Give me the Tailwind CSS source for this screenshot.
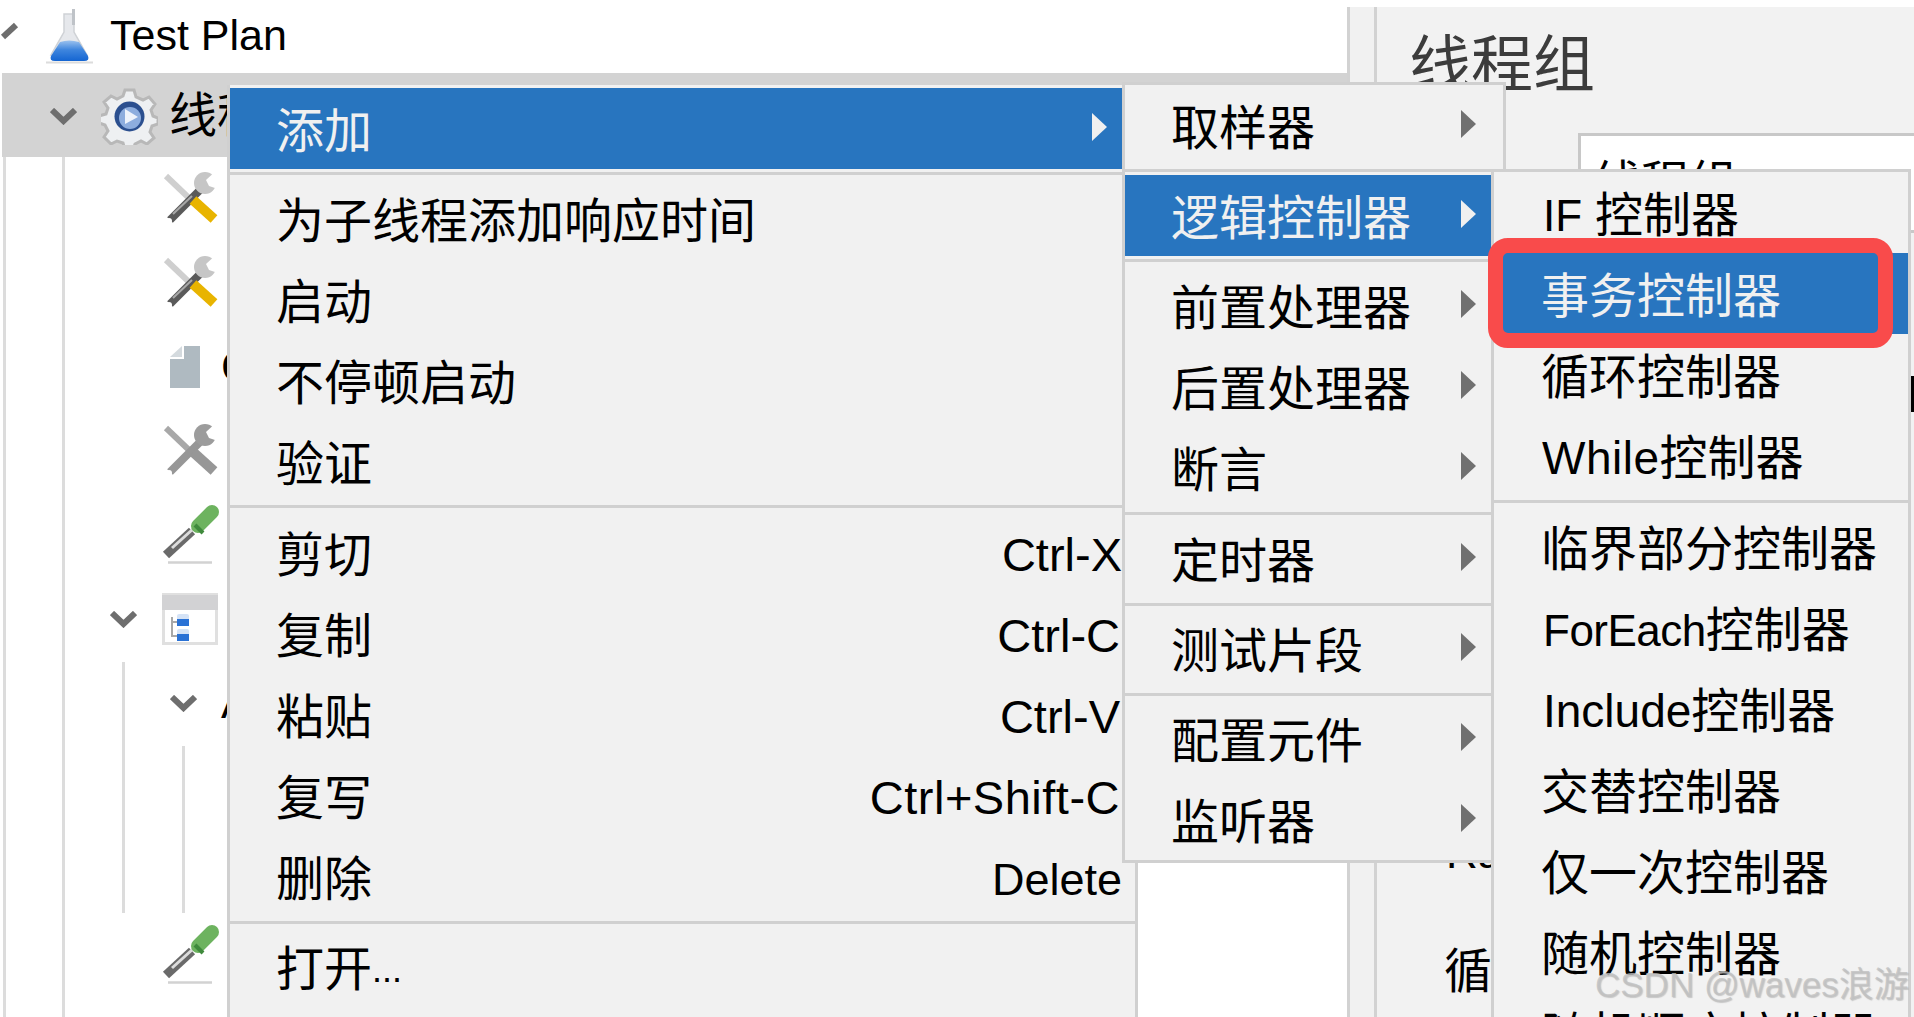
<!DOCTYPE html>
<html lang="zh">
<head>
<meta charset="utf-8">
<script src="https://cdn.jsdelivr.net/npm/@tailwindcss/browser@4"></script>
</head>
<body class="m-0 bg-white">
<div class="relative w-[1914px] h-[1017px] overflow-hidden bg-white text-black text-[48px] [font-family:'Liberation_Sans','Noto_Sans_CJK_SC',sans-serif]">

  <!-- base window -->
  <div class="flex h-full pt-[7px]">
    <!-- tree -->
    <div class="relative w-[1347px] shrink-0 bg-white overflow-hidden">
      <div class="absolute left-[3px] top-[150px] bottom-0 w-[3px] bg-[#dcdcdc]"></div>
      <div class="absolute left-[62px] top-[150px] bottom-0 w-[3px] bg-[#dcdcdc]"></div>
      <div class="absolute left-[122px] top-[655px] h-[251px] w-[3px] bg-[#dcdcdc]"></div>
      <div class="absolute left-[182px] top-[739px] h-[167px] w-[3px] bg-[#dcdcdc]"></div>
      <svg class="absolute left-0 top-[14px] w-[20px] h-[20px]" viewBox="0 0 20 20"><path d="M3 16 L16 4" stroke="#6e6e6e" stroke-width="6" fill="none"/></svg>

      <div class="-mt-[18px] flex flex-col">
        <!-- Test Plan -->
        <div class="flex items-center h-[84px] pl-[46px] pt-[9px]">
          <svg class="w-[48px] h-[56px] mr-[16px] shrink-0" viewBox="0 0 48 56">
            <defs><linearGradient id="liq" x1="0" y1="0" x2="0" y2="1"><stop offset="0" stop-color="#9cc2ee"/><stop offset="0.45" stop-color="#3f86de"/><stop offset="1" stop-color="#1465d2"/></linearGradient></defs>
            <path d="M18 6 H28 V24 L41 47 H5 L18 24 Z" fill="#e6e8ec" stroke="#cfd2d6" stroke-width="1.5"/>
            <path d="M26 1 h3 v16 h-3z" fill="#bfc3c8"/>
            <path d="M14 34 Q23 31 33 34 L42 48 Q44 53 38 53 H9 Q3 53 5 48 Z" fill="url(#liq)"/>
            <path d="M0 54.5 H47" stroke="#dcdcdc" stroke-width="2"/>
          </svg>
          <span class="text-[43px] leading-none">Test Plan</span>
        </div>
        <!-- thread group -->
        <div class="flex items-center h-[84px] pl-[48px] pt-[2px] bg-[#d3d3d3] ml-[2px]">
          <svg class="w-[27px] h-[17px] mr-[24px] shrink-0" viewBox="0 0 27 17"><path d="M2 2 L13.5 13 L25 2" stroke="#6e6e6e" stroke-width="6" fill="none"/></svg>
          <svg class="w-[57px] h-[57px] mr-[11px] shrink-0" viewBox="0 0 57 57">
            <path d="M24 2 h9 l2 7 l7 3 l6 -3 l6 7 l-4 6 l2 6 l5 2 v6 l-6 2 l-2 6 l4 6 l-7 6 l-6 -3 l-6 3 l-2 6 h-8 l-2 -7 l-6 -2 l-6 3 l-7 -7 l4 -6 l-3 -6 l-6 -2 v-7 l7 -2 l2 -6 l-4 -6 l7 -6 l6 3 l6 -3 z" fill="#eef0f2" stroke="#b8b8b8" stroke-width="3"/>
            <circle cx="28.5" cy="28.5" r="15" fill="#2b4f8f"/>
            <circle cx="29" cy="30" r="11" fill="#8dadde"/>
            <path d="M24 21 L37 29 L24 36 Z" fill="#eef3fb"/>
          </svg>
          <span class="leading-none">线程组</span>
        </div>
        <!-- tools -->
        <div class="flex items-center h-[84px] pl-[162px]">
          <svg class="w-[56px] h-[56px]" viewBox="0 0 56 56">
            <path d="M4 5 L27 27" stroke="#cfcfcf" stroke-width="6" fill="none"/>
            <path d="M8 49 L38 19" stroke="#5a5a5a" stroke-width="8" fill="none"/>
            <path d="M11 43 L30 25" stroke="#a8a8a8" stroke-width="2" fill="none"/>
            <circle cx="43" cy="12" r="11" fill="#c6c6c6"/>
            <path d="M56 -2 L44 9 L47 15 L56 18 Z" fill="#fff"/>
            <path d="M31 29 L52 48" stroke="#e8b400" stroke-width="10" fill="none"/>
            <circle cx="7" cy="50" r="3" fill="#fff"/>
          </svg>
        </div>
        <div class="flex items-center h-[84px] pl-[162px]">
          <svg class="w-[56px] h-[56px]" viewBox="0 0 56 56">
            <path d="M4 5 L27 27" stroke="#cfcfcf" stroke-width="6" fill="none"/>
            <path d="M8 49 L38 19" stroke="#5a5a5a" stroke-width="8" fill="none"/>
            <path d="M11 43 L30 25" stroke="#a8a8a8" stroke-width="2" fill="none"/>
            <circle cx="43" cy="12" r="11" fill="#c6c6c6"/>
            <path d="M56 -2 L44 9 L47 15 L56 18 Z" fill="#fff"/>
            <path d="M31 29 L52 48" stroke="#e8b400" stroke-width="10" fill="none"/>
            <circle cx="7" cy="50" r="3" fill="#fff"/>
          </svg>
        </div>
        <!-- page -->
        <div class="flex items-center h-[84px] pl-[170px]">
          <svg class="w-[30px] h-[42px] mr-[21px] shrink-0" viewBox="0 0 30 42"><path d="M14 0 H30 V42 H0 V13 H14 Z" fill="#afbac1"/><path d="M0 11 L12 0 V11 Z" fill="#d4dade"/></svg>
          <span class="text-[44px] leading-none">CSV</span>
        </div>
        <!-- gray tools -->
        <div class="flex items-center h-[84px] pl-[162px]">
          <svg class="w-[56px] h-[56px]" viewBox="0 0 56 56">
            <path d="M4 5 L27 27" stroke="#a8a8a8" stroke-width="6" fill="none"/>
            <path d="M8 49 L38 19" stroke="#979797" stroke-width="8" fill="none"/>
            <circle cx="43" cy="12" r="11" fill="#9c9c9c"/>
            <path d="M56 -2 L44 9 L47 15 L56 18 Z" fill="#fff"/>
            <path d="M31 29 L52 48" stroke="#979797" stroke-width="10" fill="none"/>
            <circle cx="7" cy="50" r="3" fill="#fff"/>
          </svg>
        </div>
        <!-- dropper -->
        <div class="flex items-center h-[84px] pl-[162px]">
          <svg class="w-[57px] h-[60px]" viewBox="0 0 57 60">
            <path d="M4 50 L30 26" stroke="#6a6a6a" stroke-width="9" fill="none"/>
            <path d="M10 43 L31 24" stroke="#dcdcdc" stroke-width="3" fill="none"/>
            <path d="M36 21 L50 7" stroke="#6db35f" stroke-width="14" stroke-linecap="round" fill="none"/>
            <path d="M33 20 L41 28" stroke="#3f8a3c" stroke-width="4" fill="none"/>
            <path d="M6 57.5 H50" stroke="#d2d2d2" stroke-width="2.5"/>
          </svg>
        </div>
        <!-- table -->
        <div class="flex items-center h-[84px] pl-[110px]">
          <svg class="w-[27px] h-[17px] mr-[25px] shrink-0" viewBox="0 0 27 17"><path d="M2 2 L13.5 13 L25 2" stroke="#6e6e6e" stroke-width="6" fill="none"/></svg>
          <svg class="w-[56px] h-[52px]" viewBox="0 0 56 52">
            <rect x="1.5" y="1.5" width="53" height="49" fill="#fff" stroke="#e0e0e0" stroke-width="3"/>
            <rect x="0" y="2" width="56" height="15" fill="#d2d2d4"/>
            <path d="M10 24 V43 H16 M10 29 H16" stroke="#a8a8a8" stroke-width="2" fill="none"/>
            <rect x="15" y="21" width="12" height="12" rx="2" fill="#d5e3f6"/><rect x="15" y="26" width="12" height="7" fill="#2a72d5"/>
            <rect x="15" y="36" width="12" height="12" rx="2" fill="#d5e3f6"/><rect x="15" y="41" width="12" height="7" fill="#2a72d5"/>
          </svg>
        </div>
        <!-- nested -->
        <div class="flex items-center h-[84px] pl-[170px]">
          <svg class="w-[27px] h-[17px] mr-[24px] shrink-0" viewBox="0 0 27 17"><path d="M2 2 L13.5 13 L25 2" stroke="#6e6e6e" stroke-width="6" fill="none"/></svg>
          <span class="text-[44px] leading-none">A</span>
        </div>
        <div class="h-[84px]"></div>
        <div class="h-[84px]"></div>
        <!-- dropper 2 -->
        <div class="flex items-center h-[84px] pl-[162px]">
          <svg class="w-[57px] h-[60px]" viewBox="0 0 57 60">
            <path d="M4 50 L30 26" stroke="#6a6a6a" stroke-width="9" fill="none"/>
            <path d="M10 43 L31 24" stroke="#dcdcdc" stroke-width="3" fill="none"/>
            <path d="M36 21 L50 7" stroke="#6db35f" stroke-width="14" stroke-linecap="round" fill="none"/>
            <path d="M33 20 L41 28" stroke="#3f8a3c" stroke-width="4" fill="none"/>
            <path d="M6 57.5 H50" stroke="#d2d2d2" stroke-width="2.5"/>
          </svg>
        </div>
      </div>
    </div>
    <!-- sash -->
    <div class="w-[30px] shrink-0 bg-[#f1f1f1] border-x-[3px] border-[#d2d2d2]"></div>
    <!-- right panel -->
    <div class="flex-1 bg-[#f2f2f2] pl-[32px] flex flex-col">
      <div class="h-[126px] pt-[24px] text-[62px] leading-[70px] text-[#3c3c3c]">线程组</div>
      <div class="ml-[169px] h-[100px] -mr-[40px] bg-white border-[3px] border-[#c8c8c8] pl-[12px] pt-[16px] leading-[64px]">线程组</div>
      <div class="mt-[595px] pl-[37px] text-[44px] leading-[50px]">Ramp</div>
      <div class="mt-[64px] pl-[35px] leading-[60px]">循环次数</div>
    </div>
  </div>

  <!-- menu 1 -->
  <div class="absolute left-[227px] top-[85px] bottom-0 w-[911px] bg-[#f1f1f1] border-l-[3px] border-r-[3px] border-[#d0d0d0] pt-[3px]">
    <div class="flex items-center h-[81px] pl-[46px] pt-[6px] bg-[#2875bf] text-[#f0f0f0]">添加<svg class="ml-auto mr-[28px] -mt-[10px] w-[15px] h-[30px]" viewBox="0 0 15 30"><path d="M0 1 L15 15 L0 29Z" fill="#f0f0f0"/></svg></div>
    <div class="h-[3px] mt-[3px] mb-[3px] bg-[#d0d0d0]"></div>
    <div class="flex items-center h-[81px] pl-[46px] pt-[6px]">为子线程添加响应时间</div>
    <div class="flex items-center h-[81px] pl-[46px] pt-[6px]">启动</div>
    <div class="flex items-center h-[81px] pl-[46px] pt-[6px]">不停顿启动</div>
    <div class="flex items-center h-[81px] pl-[46px] pt-[6px]">验证</div>
    <div class="h-[3px] mt-[3px] mb-[4px] bg-[#d0d0d0]"></div>
    <div class="flex items-center justify-between h-[81px] pl-[46px] pr-[13px] pt-[6px]"><span>剪切</span><span class="text-[47px]">Ctrl-X</span></div>
    <div class="flex items-center justify-between h-[81px] pl-[46px] pr-[15px] pt-[6px]"><span>复制</span><span class="text-[47px]">Ctrl-C</span></div>
    <div class="flex items-center justify-between h-[81px] pl-[46px] pr-[15px] pt-[6px]"><span>粘贴</span><span class="text-[47px]">Ctrl-V</span></div>
    <div class="flex items-center justify-between h-[81px] pl-[46px] pr-[15px] pt-[6px]"><span>复写</span><span class="text-[47px] tracking-[0.5px]">Ctrl+Shift-C</span></div>
    <div class="flex items-center justify-between h-[81px] pl-[46px] pr-[13px] pt-[6px]"><span>删除</span><span class="text-[45px]">Delete</span></div>
    <div class="h-[3px] mt-[4px] mb-[2px] bg-[#d0d0d0]"></div>
    <div class="flex items-center h-[81px] pl-[46px] pt-[6px]">打开<span class="text-[36px] self-end mb-[10px]">...</span></div>
  </div>

  <!-- menu 2 -->
  <div class="absolute left-[1122px] top-[82px] w-[384px] h-[781px] bg-[#f1f1f1] border-[3px] border-[#d0d0d0]">
    <div class="flex items-center justify-between h-[81px] pl-[46px] pr-[27px] pt-[6px]">取样器<svg class="w-[15px] h-[30px] -mt-[10px]" viewBox="0 0 15 30"><path d="M0 1 L15 15 L0 29Z" fill="#707070"/></svg></div>
    <div class="h-[3px] mt-[3px] mb-[3px] bg-[#d0d0d0]"></div>
    <div class="flex items-center justify-between h-[81px] pl-[46px] pr-[27px] pt-[6px] bg-[#2875bf] text-[#f0f0f0]">逻辑控制器<svg class="w-[15px] h-[30px] -mt-[10px]" viewBox="0 0 15 30"><path d="M0 1 L15 15 L0 29Z" fill="#f0f0f0"/></svg></div>
    <div class="h-[3px] mt-[3px] mb-[3px] bg-[#d0d0d0]"></div>
    <div class="flex items-center justify-between h-[81px] pl-[46px] pr-[27px] pt-[6px]">前置处理器<svg class="w-[15px] h-[30px] -mt-[10px]" viewBox="0 0 15 30"><path d="M0 1 L15 15 L0 29Z" fill="#707070"/></svg></div>
    <div class="flex items-center justify-between h-[81px] pl-[46px] pr-[27px] pt-[6px]">后置处理器<svg class="w-[15px] h-[30px] -mt-[10px]" viewBox="0 0 15 30"><path d="M0 1 L15 15 L0 29Z" fill="#707070"/></svg></div>
    <div class="flex items-center justify-between h-[81px] pl-[46px] pr-[27px] pt-[6px]">断言<svg class="w-[15px] h-[30px] -mt-[10px]" viewBox="0 0 15 30"><path d="M0 1 L15 15 L0 29Z" fill="#707070"/></svg></div>
    <div class="h-[3px] mt-[4px] mb-[3px] bg-[#d0d0d0]"></div>
    <div class="flex items-center justify-between h-[81px] pl-[46px] pr-[27px] pt-[6px]">定时器<svg class="w-[15px] h-[30px] -mt-[10px]" viewBox="0 0 15 30"><path d="M0 1 L15 15 L0 29Z" fill="#707070"/></svg></div>
    <div class="h-[3px] mt-[4px] mb-[2px] bg-[#d0d0d0]"></div>
    <div class="flex items-center justify-between h-[81px] pl-[46px] pr-[27px] pt-[6px]">测试片段<svg class="w-[15px] h-[30px] -mt-[10px]" viewBox="0 0 15 30"><path d="M0 1 L15 15 L0 29Z" fill="#707070"/></svg></div>
    <div class="h-[3px] mt-[4px] mb-[2px] bg-[#d0d0d0]"></div>
    <div class="flex items-center justify-between h-[81px] pl-[46px] pr-[27px] pt-[6px]">配置元件<svg class="w-[15px] h-[30px] -mt-[10px]" viewBox="0 0 15 30"><path d="M0 1 L15 15 L0 29Z" fill="#707070"/></svg></div>
    <div class="flex items-center justify-between h-[81px] pl-[46px] pr-[27px] pt-[6px]">监听器<svg class="w-[15px] h-[30px] -mt-[10px]" viewBox="0 0 15 30"><path d="M0 1 L15 15 L0 29Z" fill="#707070"/></svg></div>
  </div>

  <!-- menu 3 -->
  <div class="absolute left-[1491px] top-[169px] w-[420px] h-[900px] bg-[#f2f2f2] border-[3px] border-[#d0d0d0]">
    <div class="flex items-center h-[81px] pl-[49px] pt-[6px]"><span class="text-[44px] mr-[13px]">IF</span>控制器</div>
    <div class="flex items-center h-[81px] pl-[47px] pt-[6px] bg-[#2875bf] text-[#f0f0f0]">事务控制器</div>
    <div class="flex items-center h-[81px] pl-[47px] pt-[6px]">循环控制器</div>
    <div class="flex items-center h-[81px] pl-[48px] pt-[6px]"><span class="text-[46px] tracking-[0.5px]">While</span>控制器</div>
    <div class="h-[3px] mt-[4px] mb-[3px] bg-[#d0d0d0]"></div>
    <div class="flex items-center h-[81px] pl-[47px] pt-[6px]">临界部分控制器</div>
    <div class="flex items-center h-[81px] pl-[49px] pt-[6px]"><span class="text-[44px] tracking-[-0.5px]">ForEach</span>控制器</div>
    <div class="flex items-center h-[81px] pl-[49px] pt-[6px]"><span class="text-[46px]">Include</span>控制器</div>
    <div class="flex items-center h-[81px] pl-[47px] pt-[6px]">交替控制器</div>
    <div class="flex items-center h-[81px] pl-[47px] pt-[6px]">仅一次控制器</div>
    <div class="flex items-center h-[81px] pl-[47px] pt-[6px]">随机控制器</div>
    <div class="flex items-center h-[81px] pl-[47px] pt-[6px]">随机顺序控制器</div>
  </div>

  <!-- annotation box -->
  <div class="absolute left-[1488px] top-[238px] w-[405px] h-[110px] border-[15px] border-[#f94b4b] rounded-[20px]"></div>

  <!-- sliver beside the submenu -->
  <div class="absolute left-[1911px] top-[376px] w-[3px] h-[36px] bg-black"></div>

  <!-- watermark -->
  <div class="absolute left-[1595px] top-[964px] text-[35px] leading-[42px] whitespace-nowrap text-[#c0c0c0]/80 [text-shadow:1px_1px_1px_rgba(120,120,120,0.35)]">CSDN @waves浪游</div>
</div>
</body>
</html>
